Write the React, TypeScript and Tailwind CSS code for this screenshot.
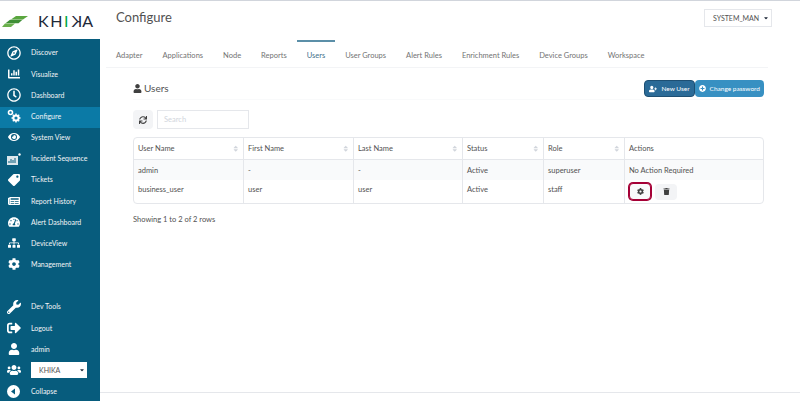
import type { ReactNode } from 'react'
import {
  FaRegCompass,
  FaChartBar,
  FaEye,
  FaTag,
  FaNewspaper,
  FaTachometerAlt,
  FaSitemap,
  FaCog,
  FaWrench,
  FaSignOutAlt,
  FaUser,
  FaUsers,
  FaCaretDown,
  FaSync,
  FaSort,
  FaUserPlus,
  FaPlusCircle,
  FaTrash,
  FaRegClock,
} from 'react-icons/fa'

function ConfigureIcon() {
  return (
    <svg width="14" height="14" viewBox="0 0 14 14" fill="none">
      <circle cx="3.5" cy="3.5" r="2" stroke="white" strokeWidth="1.6" />
      <circle cx="9" cy="9" r="2.6" stroke="white" strokeWidth="2" />
      <path d="M9 4.5v1.5M9 12v1.5M4.5 9H6M12 9h1.5M5.8 5.8l1 1M11.2 11.2l1 1M12.2 5.8l-1 1M6.8 11.2l-1 1" stroke="white" strokeWidth="1.4" />
    </svg>
  )
}

function IncidentIcon() {
  return (
    <svg width="14" height="12" viewBox="0 0 14 12">
      <path d="M0 3h11v9H0z" fill="#dbe7ec" />
      <path d="M2 10V8M4 10V6M6 10V7M8 10V5" stroke="#075c7d" strokeWidth="1" />
      <circle cx="12.5" cy="1.5" r="1.2" fill="white" />
    </svg>
  )
}

function CollapseIcon() {
  return (
    <svg width="13" height="13" viewBox="0 0 13 13">
      <circle cx="6.5" cy="6.5" r="6.5" fill="white" />
      <path d="M8 3.5v6L4 6.5z" fill="#075c7d" />
    </svg>
  )
}

const mainNav = [
  { label: 'Discover', icon: <FaRegCompass className="text-sm" /> },
  { label: 'Visualize', icon: <FaChartBar /> },
  { label: 'Dashboard', icon: <FaRegClock className="text-sm" /> },
  { label: 'Configure', icon: <ConfigureIcon />, active: true },
  { label: 'System View', icon: <FaEye /> },
  { label: 'Incident Sequence', icon: <IncidentIcon /> },
  { label: 'Tickets', icon: <FaTag className="rotate-90" /> },
  { label: 'Report History', icon: <FaNewspaper /> },
  { label: 'Alert Dashboard', icon: <FaTachometerAlt /> },
  { label: 'DeviceView', icon: <FaSitemap /> },
  { label: 'Management', icon: <FaCog /> },
]

const tabs = [
  'Adapter',
  'Applications',
  'Node',
  'Reports',
  'Users',
  'User Groups',
  'Alert Rules',
  'Enrichment Rules',
  'Device Groups',
  'Workspace',
]

const columns = [
  { label: 'User Name', width: 'w-[110px]' },
  { label: 'First Name', width: 'w-[110px]' },
  { label: 'Last Name', width: 'w-[109px]' },
  { label: 'Status', width: 'w-[81px]' },
  { label: 'Role', width: 'w-[81px]' },
]

function NavItem({ icon, active, children }: { icon: ReactNode; active?: boolean; children: ReactNode }) {
  return (
    <div className={`flex h-[21.2px] items-center pb-0.5 ${active ? 'bg-[#0b7aa6]' : ''}`}>
      <span className="flex w-[31px] justify-center pr-1 text-xs text-white">{icon}</span>
      <span className="text-[7px] text-gray-100">{children}</span>
    </div>
  )
}

function Logo() {
  return (
    <div className="flex h-[38px] items-center gap-2.5 pt-0.5 pl-0.5">
      <svg width="26" height="11" viewBox="0 0 26 11">
        <path d="M14 0h12l-5 3.4H9z" fill="#5aa63f" />
        <path d="M8 3.8h12.5l-4 3.4H3.5z" fill="#3f8f36" />
        <path d="M3 7.6h10L9 11H0z" fill="#6ab04c" />
      </svg>
      <div className="flex items-center text-base leading-none tracking-widest text-gray-800">
        <span>KH</span>
        <span className="text-green-600">I</span>
        <span className="-scale-x-100">K</span>
        <span>A</span>
      </div>
    </div>
  )
}

function Sidebar() {
  return (
    <aside className="flex w-[100px] shrink-0 flex-col">
      <Logo />
      <nav className="flex flex-1 flex-col bg-[#075c7d] pt-1">
        {mainNav.map((item) => (
          <NavItem key={item.label} icon={item.icon} active={item.active}>
            {item.label}
          </NavItem>
        ))}
        <div className="mt-auto -mb-0.5">
          <NavItem icon={<FaWrench className="text-sm" />}>Dev Tools</NavItem>
          <NavItem icon={<FaSignOutAlt className="text-sm" />}>Logout</NavItem>
          <NavItem icon={<FaUser />}>admin</NavItem>
          <div className="flex h-[21.2px] items-center pb-0.5">
            <span className="flex w-[31px] justify-center pr-1 text-xs text-white">
              <FaUsers className="text-sm" />
            </span>
            <div className="flex h-4 w-14 items-center justify-between bg-white pr-0.5 pl-2 text-[7px] text-neutral-600">
              KHIKA
              <FaCaretDown className="text-[6px] text-gray-800" />
            </div>
          </div>
          <NavItem icon={<CollapseIcon />}>Collapse</NavItem>
        </div>
      </nav>
    </aside>
  )
}

function Table() {
  return (
    <div className="mt-2 rounded-sm border border-gray-200 text-[7.5px] text-neutral-600">
      <div className="flex h-[22px] border-b border-gray-200">
        {columns.map((col) => (
          <div key={col.label} className={`flex items-center justify-between border-r border-gray-200 px-1 ${col.width}`}>
            {col.label}
            <FaSort className="text-gray-300" />
          </div>
        ))}
        <div className="flex flex-1 items-center px-1">Actions</div>
      </div>
      <div className="flex h-5 bg-gray-50">
        <div className="flex w-[110px] items-center border-r border-gray-200 px-1">admin</div>
        <div className="flex w-[110px] items-center border-r border-gray-200 px-1">-</div>
        <div className="flex w-[109px] items-center border-r border-gray-200 px-1">-</div>
        <div className="flex w-[81px] items-center border-r border-gray-200 px-1">Active</div>
        <div className="flex w-[81px] items-center border-r border-gray-200 px-1">superuser</div>
        <div className="flex flex-1 items-center px-1">No Action Required</div>
      </div>
      <div className="flex h-[23px]">
        <div className="w-[110px] border-r border-gray-200 px-1 pt-1">business_user</div>
        <div className="w-[110px] border-r border-gray-200 px-1 pt-1">user</div>
        <div className="w-[109px] border-r border-gray-200 px-1 pt-1">user</div>
        <div className="w-[81px] border-r border-gray-200 px-1 pt-1">Active</div>
        <div className="w-[81px] border-r border-gray-200 px-1 pt-1">staff</div>
        <div className="flex flex-1 items-center gap-1 px-1">
          <button className="flex h-[17px] w-[22px] items-center justify-center rounded-sm border border-rose-800 bg-gray-50 text-[7px] text-neutral-700 ring-1 ring-rose-800">
            <FaCog />
          </button>
          <button className="flex h-4 w-[22px] items-center justify-center rounded-sm bg-gray-100 text-[7px] text-neutral-700">
            <FaTrash />
          </button>
        </div>
      </div>
    </div>
  )
}

export default function App() {
  return (
    <div className="flex h-[401px] w-[800px] overflow-hidden border-t border-gray-300 bg-white font-['Lato',sans-serif]">
      <Sidebar />
      <main className="flex min-w-0 flex-1 flex-col">
        <header className="flex h-[39px] items-start justify-between pt-2 pr-7 pl-4">
          <h1 className="text-[13px] leading-4 text-neutral-600">Configure</h1>
          <div className="flex h-[18px] w-[68px] items-center justify-between border border-gray-200 pr-0.5 pl-2 text-[7px] text-neutral-600">
            SYSTEM_MAN
            <FaCaretDown className="text-[6px] text-gray-800" />
          </div>
        </header>

        <div className="mr-8 ml-1.5 flex border-b border-gray-100">
          {tabs.map((tab) => (
            <div
              key={tab}
              className={`border-t-2 px-2.5 pt-2 pb-1.5 text-[7.5px] ${
                tab === 'Users' ? 'border-[#5b8fa8] text-[#3f6f8c]' : 'border-transparent text-neutral-500'
              }`}
            >
              {tab}
            </div>
          ))}
        </div>

        <section className="flex flex-1 flex-col pt-3 pr-9 pl-[33px]">
          <div className="flex h-5 items-start justify-between border-b border-gray-50">
            <div className="flex items-center gap-0.5 text-[10px] leading-4 text-neutral-600">
              <FaUser className="text-[9px] text-neutral-700" />
              Users
            </div>
            <div className="flex text-[6.5px] text-white">
              <button className="flex h-[17px] items-center gap-1 rounded-sm border border-[#1d4f73] bg-[#2a6a97] px-1">
                <FaUserPlus className="text-[8px]" />
                New User
              </button>
              <button className="flex h-[17px] items-center gap-1 rounded-sm bg-[#3790c2] px-1">
                <FaPlusCircle className="text-[7px]" />
                Change password
              </button>
            </div>
          </div>

          <div className="mt-2.5 flex gap-1">
            <button className="flex h-[19px] w-5 items-center justify-center rounded-sm bg-gray-100 text-[8px] text-neutral-700">
              <FaSync />
            </button>
            <div className="flex h-[19px] w-[92px] items-center border border-gray-200 px-1.5 text-[7.5px] text-gray-300">
              Search
            </div>
          </div>

          <Table />

          <p className="mt-2.5 text-[7.5px] text-neutral-600">Showing 1 to 2 of 2 rows</p>
        </section>

        <div className="mb-2 border-t border-gray-200" />
      </main>
    </div>
  )
}
